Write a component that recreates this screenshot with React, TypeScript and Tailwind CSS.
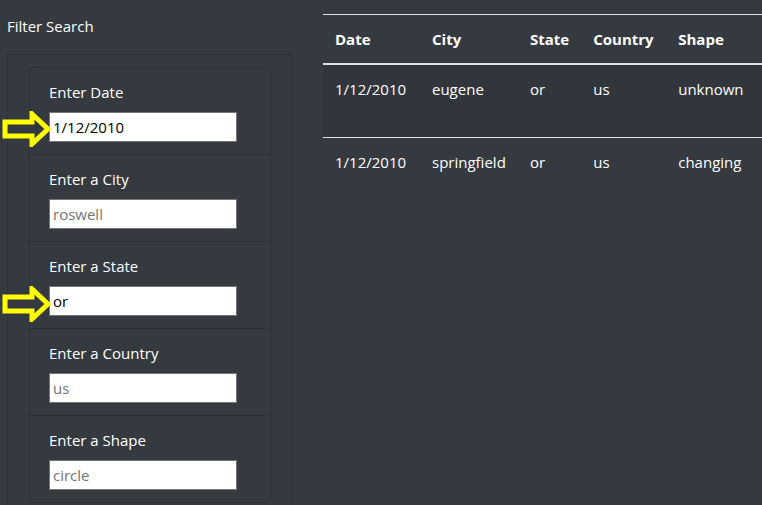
import React from "react";

interface Sighting {
  date: string;
  city: string;
  state: string;
  country: string;
  shape: string;
}

const sightings: Sighting[] = [
  { date: "1/12/2010", city: "eugene", state: "or", country: "us", shape: "unknown" },
  { date: "1/12/2010", city: "springfield", state: "or", country: "us", shape: "changing" },
];

const filters = [
  { label: "Enter Date", value: "1/12/2010", placeholder: "1/11/2011" },
  { label: "Enter a City", value: "", placeholder: "roswell" },
  { label: "Enter a State", value: "or", placeholder: "ca" },
  { label: "Enter a Country", value: "", placeholder: "us" },
  { label: "Enter a Shape", value: "", placeholder: "circle" },
];

function Arrow({ className }: { className: string }) {
  return (
    <svg className={className} width="50" height="36" viewBox="0 0 50 36">
      <polygon
        points="4,11 31,11 31,3 47,18 31,33 31,25 4,25"
        fill="#33383e"
        stroke="#ffff00"
        strokeWidth="5"
        strokeLinejoin="miter"
      />
    </svg>
  );
}

export default function App() {
  return (
    <div className="relative flex min-h-[505px] overflow-hidden bg-[#343a40] font-['Open_Sans',sans-serif] text-[16px] leading-6 text-white">
      <aside className="w-[323px] shrink-0 pl-[7px] pr-[30px]">
        <p className="pt-[14px] text-[15px]">Filter Search</p>
        <div className="mt-4 h-[470px] border border-[#2c3136] px-[21px] pt-3">
          <ul className="rounded border border-[#2c3136]">
            {filters.map((f, i) => (
              <li
                key={f.label}
                className={`flex flex-col gap-2 px-[19px] py-3 ${i > 0 ? "border-t border-[#2c3136]" : ""}`}
              >
                <label className="text-[15px]">{f.label}</label>
                <input
                  defaultValue={f.value}
                  placeholder={f.placeholder}
                  className="h-[30px] w-[188px] border border-[#767676] bg-white px-[3px] text-[15px] text-black placeholder:text-[#757575]"
                />
              </li>
            ))}
          </ul>
        </div>
      </aside>

      <Arrow className="absolute left-[1px] top-[111px]" />
      <Arrow className="absolute left-[1px] top-[286px]" />

      <main className="min-w-0 flex-1 pt-[14px]">
        <table className="w-[520px] border-collapse text-left text-[15px]">
          <thead>
            <tr>
              <th className="w-[97px] border-t border-b-2 border-[#dee2e6] px-3 py-3 font-bold">Date</th>
              <th className="w-[98px] border-t border-b-2 border-[#dee2e6] px-3 py-3 font-bold">City</th>
              <th className="w-[62px] border-t border-b-2 border-[#dee2e6] px-3 py-3 font-bold">State</th>
              <th className="w-[85px] border-t border-b-2 border-[#dee2e6] px-3 py-3 font-bold">Country</th>
              <th className="border-t border-b-2 border-[#dee2e6] px-3 py-3 font-bold">Shape</th>
            </tr>
          </thead>
          <tbody>
            {sightings.map((s, i) => (
              <tr key={i} className={i === 0 ? "h-[73px] bg-[#31363c]" : ""}>
                <td className="border-t border-[#dee2e6] px-3 py-3 align-top">{s.date}</td>
                <td className="border-t border-[#dee2e6] px-3 py-3 align-top">{s.city}</td>
                <td className="border-t border-[#dee2e6] px-3 py-3 align-top">{s.state}</td>
                <td className="border-t border-[#dee2e6] px-3 py-3 align-top">{s.country}</td>
                <td className="border-t border-[#dee2e6] px-3 py-3 align-top">{s.shape}</td>
              </tr>
            ))}
          </tbody>
        </table>
      </main>
    </div>
  );
}
